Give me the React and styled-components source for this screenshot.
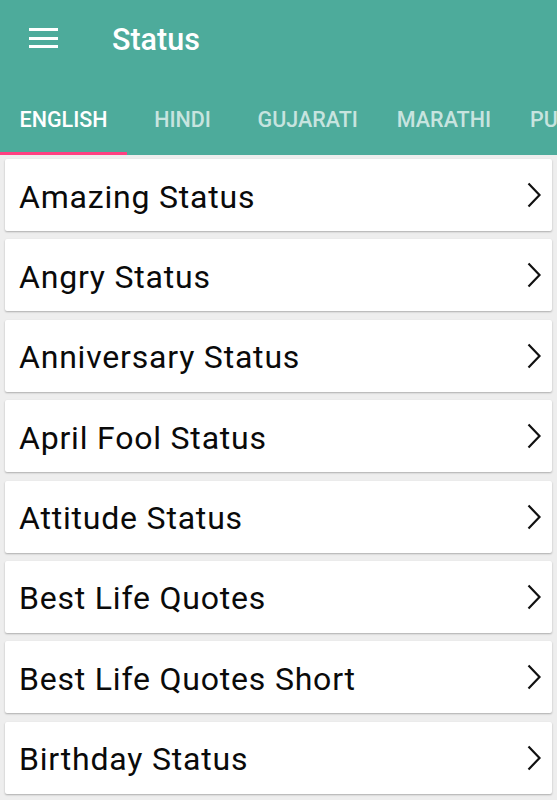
import styled, { createGlobalStyle } from 'styled-components';

const GlobalStyle = createGlobalStyle`
  body {
    margin: 0;
    background: #eeeeee;
    font-family: Roboto, "Liberation Sans", sans-serif;
  }
`;

const Screen = styled.div`
  width: 557px;
  height: 800px;
  overflow: hidden;
  background: #eeeeee;
`;

const AppBar = styled.header`
  background: #4dab9b;
  height: 155px;
  display: flex;
  flex-direction: column;
`;

const Toolbar = styled.div`
  height: 78px;
  display: flex;
  align-items: center;
  padding-left: 29px;
`;

const MenuButton = styled.div`
  width: 29px;
  display: flex;
  flex-direction: column;
  gap: 5.5px;
  margin-top: -2px;

  span {
    display: block;
    height: 3px;
    background: #fff;
  }
`;

const Title = styled.h1`
  margin: 0 0 0 54px;
  color: #fff;
  font-size: 30.5px;
  font-weight: 500;
`;

const Tabs = styled.nav`
  height: 77px;
  display: flex;
  white-space: nowrap;
  overflow: hidden;
`;

const Tab = styled.div`
  position: relative;
  flex: none;
  min-width: 111px;
  padding: 5px 19.5px 0;
  box-sizing: border-box;
  display: flex;
  align-items: center;
  justify-content: center;
  font-size: 21.5px;
  font-weight: 500;
  color: ${p => (p.$active ? '#ffffff' : 'rgba(255, 255, 255, 0.7)')};

  &::after {
    content: '';
    position: absolute;
    left: 0;
    right: 0;
    bottom: 0;
    height: 3px;
    background: ${p => (p.$active ? '#ff4081' : 'transparent')};
  }
`;

const List = styled.div`
  display: flex;
  flex-direction: column;
  gap: 8.4px;
  padding: 4px 5px;
`;

const Card = styled.div`
  height: 72px;
  background: #fff;
  border-radius: 2px;
  box-shadow: 0 1px 2px rgba(0, 0, 0, 0.28);
  display: flex;
  align-items: center;
  justify-content: space-between;
  padding: 0 10px 0 14px;
`;

const Label = styled.span`
  margin-top: 3px;
  font-size: 32px;
  letter-spacing: 0.8px;
  color: #0a0a0a;
`;

const Chevron = () => (
  <svg width="16" height="26" viewBox="0 0 16 26">
    <path d="M2.5 1.5 L13.5 13 L2.5 24.5" fill="none" stroke="#111" strokeWidth="2.2" />
  </svg>
);

const tabs = ['ENGLISH', 'HINDI', 'GUJARATI', 'MARATHI', 'PUNJABI'];

const items = [
  'Amazing Status',
  'Angry Status',
  'Anniversary Status',
  'April Fool Status',
  'Attitude Status',
  'Best Life Quotes',
  'Best Life Quotes Short',
  'Birthday Status',
];

export default function App() {
  return (
    <Screen>
      <GlobalStyle />
      <AppBar>
        <Toolbar>
          <MenuButton>
            <span />
            <span />
            <span />
          </MenuButton>
          <Title>Status</Title>
        </Toolbar>
        <Tabs>
          {tabs.map((t, i) => (
            <Tab key={t} $active={i === 0}>{t}</Tab>
          ))}
        </Tabs>
      </AppBar>
      <List>
        {items.map(item => (
          <Card key={item}>
            <Label>{item}</Label>
            <Chevron />
          </Card>
        ))}
      </List>
    </Screen>
  );
}
